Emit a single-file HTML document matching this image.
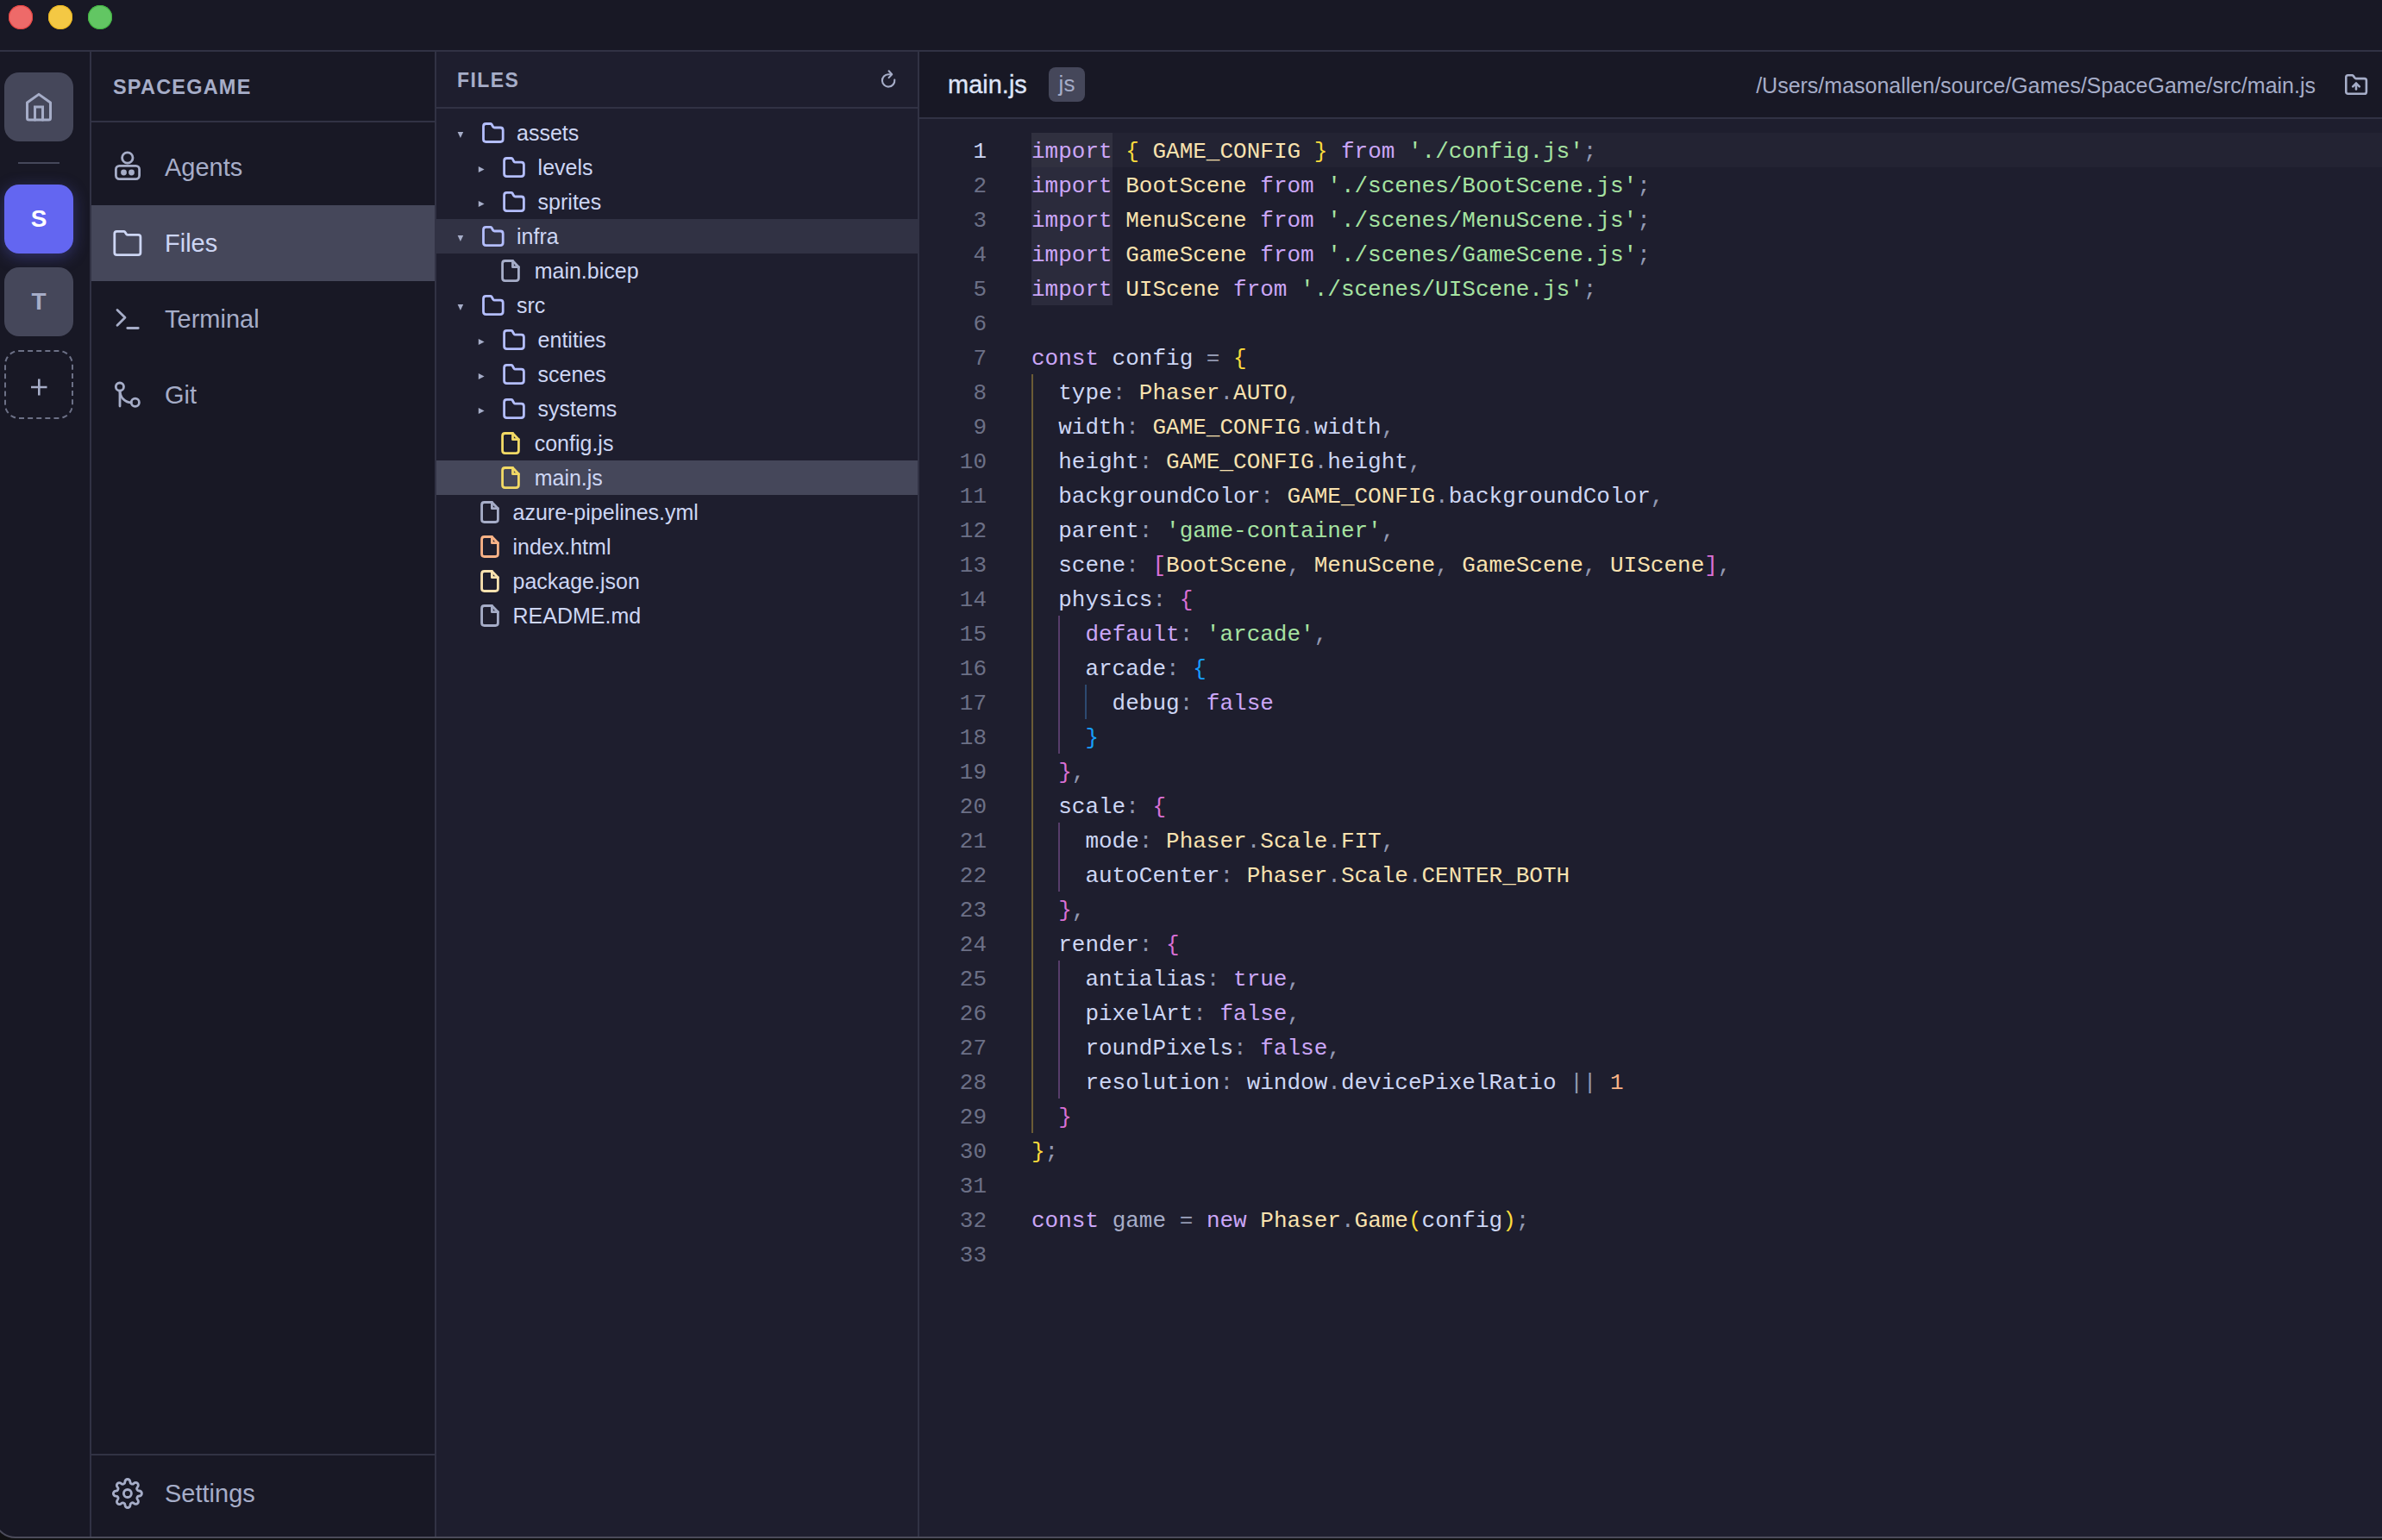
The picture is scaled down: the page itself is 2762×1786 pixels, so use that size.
<!DOCTYPE html>
<html><head><meta charset="utf-8">
<style>
*{margin:0;padding:0;box-sizing:border-box}
html,body{width:2762px;height:1786px;overflow:hidden;background:#111113}
body{font-family:"Liberation Sans",sans-serif;position:relative}
.win{position:absolute;left:-8px;top:-22px;width:2802px;height:1806px;background:#181825;border-radius:26px;border:2px solid #4b4b5a;overflow:hidden}
.inner{position:absolute;left:6px;top:20px;width:2762px;height:1782px}
.abs{position:absolute}
.dot{position:absolute;top:6px;width:28px;height:28px;border-radius:50%}
.hline{position:absolute;height:2px;background:#313244}
.vline{position:absolute;width:2px;background:#313244}
/* left rail */
.rbtn{position:absolute;left:5px;width:80px;height:80px;border-radius:17px;background:#45475a;display:flex;align-items:center;justify-content:center;font-weight:bold;font-size:28px;color:#a6adc8}
/* sidebar */
.side{position:absolute;left:106px;top:60px;width:398px;height:1722px;background:#181825}
.sitem{position:absolute;left:0;width:398px;height:88px;color:#a6adc8;font-size:29px}
.sitem .lbl{position:absolute;left:85px;top:0;line-height:88px}
.sitem svg{position:absolute}
/* files */
.files{position:absolute;left:506px;top:60px;width:558px;height:1722px;background:#1e1e2e}
.row{position:absolute;left:0;width:558px;height:40px;font-size:25px;color:#cdd6f4}
.row .t{position:absolute;top:0;line-height:40px;white-space:pre}
.row svg{position:absolute}
/* editor */
.ed{position:absolute;left:1066px;top:60px;width:1696px;height:1722px;background:#1e1e2e}
.code{position:absolute;left:0;top:0;font-family:"Liberation Mono",monospace;font-size:26px;white-space:pre}
.ln{position:absolute;width:78px;text-align:right;left:0;color:#6c7086;font-family:"Liberation Mono",monospace;font-size:26px;line-height:40px}
.cl{position:absolute;left:130px;line-height:40px;color:#cdd6f4;font-family:"Liberation Mono",monospace;font-size:26px;white-space:pre}
.k{color:#cba6f7}.v{color:#f9e2af}.s{color:#a6e3a1}.p{color:#9399b2}.b1{color:#fcdc3c}.b2{color:#da70d6}.b3{color:#179fff}.n{color:#fab387}.d{color:#a6adc8}
</style></head><body>
<div class="win"><div class="inner">
<!-- title bar -->
<div class="dot" style="left:10px;background:#ee6a69;box-shadow:inset 0 0 0 1px #e5413f"></div>
<div class="dot" style="left:56px;background:#f4c844;box-shadow:inset 0 0 0 1px #e9b31c"></div>
<div class="dot" style="left:102px;background:#62c663;box-shadow:inset 0 0 0 1px #3fb23f"></div>
<div class="hline" style="left:0;top:58px;width:2762px"></div>

<!-- left rail -->
<div class="vline" style="left:104px;top:60px;height:1722px"></div>

<div class="rbtn" style="top:84px"><svg width="80" height="80" style="position:absolute;left:0;top:0" fill="none" stroke="#a6adc8" stroke-width="3" stroke-linejoin="round" stroke-linecap="round">
<path d="M26.5 35 L40 25.4 L53.5 35 V53 Q53.5 55.1 51.5 55.1 H28.5 Q26.5 55.1 26.5 53 Z"/><path d="M35.5 55 V40 H44.5 V55" stroke-linejoin="miter"/></svg></div>
<div class="abs" style="left:21px;top:188px;width:48px;height:2px;background:#45475a"></div>
<div class="rbtn" style="top:214px;background:#6366f1;color:#fff;box-shadow:0 4px 18px rgba(99,102,241,0.35)">S</div>
<div class="rbtn" style="top:310px">T</div>
<div class="rbtn" style="top:406px;background:transparent;border:2px dashed #6c7086"><svg width="30" height="30" style="position:absolute;left:23px;top:26px" stroke="#a6adc8" stroke-width="2.6"><path d="M6 15H24.5M15.3 5.5V24.5"/></svg></div>


<!-- sidebar -->
<div class="side">

<div class="abs" style="left:25px;top:24px;font-size:23.5px;font-weight:bold;letter-spacing:1.2px;color:#a6adc8;line-height:34px">SPACEGAME</div>
<div class="hline" style="left:0;top:80px;width:398px"></div>
<svg class="abs" width="398" height="1722" style="left:0;top:0;overflow:visible" fill="none" stroke-linecap="round" stroke-linejoin="round">
</svg>
<div class="sitem" style="top:90px"><span class="lbl">Agents</span></div>
<div class="sitem" style="top:178px;background:#45475a;color:#cdd6f4"><span class="lbl">Files</span></div>
<div class="sitem" style="top:266px"><span class="lbl">Terminal</span></div>
<div class="sitem" style="top:354px"><span class="lbl">Git</span></div>
<div class="hline" style="left:0;top:1626px;width:398px"></div>
<div class="sitem" style="top:1628px"><span class="lbl">Settings</span></div>
<svg class="abs" width="398" height="1722" style="left:0;top:0" fill="none" stroke-linecap="round" stroke-linejoin="round" stroke-width="2.8">
<g stroke="#a6adc8">
<circle cx="41.8" cy="123" r="6.2"/>
<rect x="28.4" y="132.4" width="27.2" height="15.2" rx="4"/>
<circle cx="37.5" cy="140" r="3.4" fill="#a6adc8" stroke="none"/><circle cx="46.5" cy="140" r="3.4" fill="#a6adc8" stroke="none"/>
</g>
<path stroke="#cdd6f4" d="M26.8 211 Q26.8 208.4 29.4 208.4 H37.4 Q38.4 208.4 39 209.2 L40.6 211.6 Q41.2 212.4 42.2 212.4 H54.3 Q56.9 212.4 56.9 215 V233 Q56.9 235.6 54.3 235.6 H29.4 Q26.8 235.6 26.8 233 Z"/>
<g stroke="#a6adc8">
<path d="M30 299.5 L39 308.3 L30 317.2"/><path d="M41.8 320.5 H54.2"/>
<circle cx="32.9" cy="388.6" r="4.6"/><path d="M33 393.2 V411"/><path d="M33 394 C33.5 401, 39 406.8, 46.2 406.8"/><circle cx="50.8" cy="406.8" r="4.6"/>
<g transform="translate(23.9 1654) scale(1.5)" stroke-width="1.9"><circle cx="12" cy="12" r="3"/><path d="M19.4 15a1.65 1.65 0 0 0 .33 1.82l.06.06a2 2 0 0 1 0 2.83 2 2 0 0 1-2.83 0l-.06-.06a1.65 1.65 0 0 0-1.82-.33 1.65 1.65 0 0 0-1 1.51V21a2 2 0 0 1-2 2 2 2 0 0 1-2-2v-.09A1.650 1.65 0 0 0 9 19.4a1.65 1.65 0 0 0-1.820.33l-.06.06a2 2 0 0 1-2.83 0 2 2 0 0 1 0-2.83l.06-.06a1.65 1.65 0 0 0 .33-1.82 1.65 1.65 0 0 0-1.51-1H3a2 2 0 0 1-2-2 2 2 0 0 1 2-2h.09A1.65 1.65 0 0 0 4.6 9a1.65 1.65 0 0 0-.33-1.82l-.06-.06a2 2 0 0 1 0-2.83 2 2 0 0 1 2.83 0l.06.06a1.65 1.65 0 0 0 1.82.33H9a1.65 1.65 0 0 0 1-1.51V3a2 2 0 0 1 2-2 2 2 0 0 1 2 2v.09a1.65 1.65 0 0 0 1 1.51 1.65 1.65 0 0 0 1.82-.33l.06-.06a2 2 0 0 1 2.83 0 2 2 0 0 1 0 2.83l-.06.06a1.65 1.65 0 0 0-.33 1.82V9a1.65 1.65 0 0 0 1.51 1H21a2 2 0 0 1 2 2 2 2 0 0 1-2 2h-.09a1.65 1.65 0 0 0-1.51 1z"/></g>
</g>
</svg>

</div>
<div class="vline" style="left:504px;top:60px;height:1722px"></div>

<!-- files -->
<div class="files">
<div class="abs" style="left:24px;top:16px;font-size:23px;font-weight:bold;letter-spacing:1.4px;color:#a6adc8;line-height:34px">FILES</div>
<svg class="abs" width="30" height="30" style="left:509px;top:18px" fill="none" stroke="#a6adc8" stroke-width="2.1" stroke-linecap="round" stroke-linejoin="round"><path d="M22.3 14.6 A7.2 7.2 0 1 1 15 8.2 H18.5"/><path d="M15.6 4.3 L19.2 8.2 L15.6 12.1"/></svg>
<div class="hline" style="left:0;top:64px;width:558px"></div>
<div class="t abs" style="left:93.0px;top:74px;font-size:25px;line-height:40px;color:#cdd6f4;white-space:pre">assets</div>
<div class="t abs" style="left:117.6px;top:114px;font-size:25px;line-height:40px;color:#cdd6f4;white-space:pre">levels</div>
<div class="t abs" style="left:117.6px;top:154px;font-size:25px;line-height:40px;color:#cdd6f4;white-space:pre">sprites</div>
<div class="abs" style="left:0;top:194px;width:558px;height:40px;background:#313244"></div>
<div class="t abs" style="left:93.0px;top:194px;font-size:25px;line-height:40px;color:#cdd6f4;white-space:pre">infra</div>
<div class="t abs" style="left:113.7px;top:234px;font-size:25px;line-height:40px;color:#cdd6f4;white-space:pre">main.bicep</div>
<div class="t abs" style="left:93.0px;top:274px;font-size:25px;line-height:40px;color:#cdd6f4;white-space:pre">src</div>
<div class="t abs" style="left:117.6px;top:314px;font-size:25px;line-height:40px;color:#cdd6f4;white-space:pre">entities</div>
<div class="t abs" style="left:117.6px;top:354px;font-size:25px;line-height:40px;color:#cdd6f4;white-space:pre">scenes</div>
<div class="t abs" style="left:117.6px;top:394px;font-size:25px;line-height:40px;color:#cdd6f4;white-space:pre">systems</div>
<div class="t abs" style="left:113.7px;top:434px;font-size:25px;line-height:40px;color:#cdd6f4;white-space:pre">config.js</div>
<div class="abs" style="left:0;top:474px;width:558px;height:40px;background:#45475a"></div>
<div class="t abs" style="left:113.7px;top:474px;font-size:25px;line-height:40px;color:#cdd6f4;white-space:pre">main.js</div>
<div class="t abs" style="left:88.5px;top:514px;font-size:25px;line-height:40px;color:#cdd6f4;white-space:pre">azure-pipelines.yml</div>
<div class="t abs" style="left:88.5px;top:554px;font-size:25px;line-height:40px;color:#cdd6f4;white-space:pre">index.html</div>
<div class="t abs" style="left:88.5px;top:594px;font-size:25px;line-height:40px;color:#cdd6f4;white-space:pre">package.json</div>
<div class="t abs" style="left:88.5px;top:634px;font-size:25px;line-height:40px;color:#cdd6f4;white-space:pre">README.md</div>
<svg class="abs" width="558" height="800" style="left:0;top:0" fill="none" stroke-width="2.8" stroke-linecap="round" stroke-linejoin="round"><g stroke="#b4befe"><path d="M54.5 86.5 Q54.5 83.5 57.5 83.5 H62.6 Q63.5 83.5 64.1 84.2 L65.8 87.2 Q66.4 88.0 67.4 88.0 H74.2 Q77.2 88.0 77.2 91.0 V101.5 Q77.2 104.5 74.2 104.5 H57.5 Q54.5 104.5 54.5 101.5 Z"/></g><path fill="#a6adc8" d="M24.6 92.9 H31.2 L27.9 99.9 Z"/><g stroke="#b4befe"><path d="M78.6 126.5 Q78.6 123.5 81.6 123.5 H86.7 Q87.6 123.5 88.2 124.2 L89.9 127.3 Q90.5 128.1 91.5 128.1 H98.4 Q101.4 128.1 101.4 131.1 V141.6 Q101.4 144.6 98.4 144.6 H81.6 Q78.6 144.6 78.6 141.6 Z"/></g><path fill="#a6adc8" d="M48.8 132.9 V139.9 L55.6 136.4 Z"/><g stroke="#b4befe"><path d="M78.6 166.4 Q78.6 163.4 81.6 163.4 H86.7 Q87.6 163.4 88.2 164.2 L89.9 167.2 Q90.5 168.0 91.5 168.0 H98.4 Q101.4 168.0 101.4 171.0 V181.6 Q101.4 184.6 98.4 184.6 H81.6 Q78.6 184.6 78.6 181.6 Z"/></g><path fill="#a6adc8" d="M48.8 172.9 V179.9 L55.6 176.4 Z"/><g stroke="#b4befe"><path d="M54.5 206.4 Q54.5 203.4 57.5 203.4 H62.6 Q63.5 203.4 64.1 204.2 L65.8 207.2 Q66.4 208.0 67.4 208.0 H74.2 Q77.2 208.0 77.2 211.0 V221.6 Q77.2 224.6 74.2 224.6 H57.5 Q54.5 224.6 54.5 221.6 Z"/></g><path fill="#a6adc8" d="M24.6 212.9 H31.2 L27.9 219.9 Z"/><g stroke="#a6adc8"><path d="M76.6 262.6 V245.5 Q76.6 242.5 79.6 242.5 H88.5 L95.4 249.7 V262.6 Q95.4 265.6 92.4 265.6 H79.6 Q76.6 265.6 76.6 262.6 Z"/><path d="M88.5 242.5 V249.7 H95.4"/></g><g stroke="#b4befe"><path d="M54.5 286.4 Q54.5 283.4 57.5 283.4 H62.6 Q63.5 283.4 64.1 284.2 L65.8 287.2 Q66.4 288.1 67.4 288.1 H74.2 Q77.2 288.1 77.2 291.1 V301.6 Q77.2 304.6 74.2 304.6 H57.5 Q54.5 304.6 54.5 301.6 Z"/></g><path fill="#a6adc8" d="M24.6 292.9 H31.2 L27.9 299.9 Z"/><g stroke="#b4befe"><path d="M78.6 326.4 Q78.6 323.4 81.6 323.4 H86.7 Q87.6 323.4 88.2 324.2 L89.9 327.2 Q90.5 328.1 91.5 328.1 H98.4 Q101.4 328.1 101.4 331.1 V341.6 Q101.4 344.6 98.4 344.6 H81.6 Q78.6 344.6 78.6 341.6 Z"/></g><path fill="#a6adc8" d="M48.8 332.9 V339.9 L55.6 336.4 Z"/><g stroke="#b4befe"><path d="M78.6 366.4 Q78.6 363.4 81.6 363.4 H86.7 Q87.6 363.4 88.2 364.2 L89.9 367.2 Q90.5 368.1 91.5 368.1 H98.4 Q101.4 368.1 101.4 371.1 V381.6 Q101.4 384.6 98.4 384.6 H81.6 Q78.6 384.6 78.6 381.6 Z"/></g><path fill="#a6adc8" d="M48.8 372.9 V379.9 L55.6 376.4 Z"/><g stroke="#b4befe"><path d="M78.6 406.4 Q78.6 403.4 81.6 403.4 H86.7 Q87.6 403.4 88.2 404.2 L89.9 407.2 Q90.5 408.1 91.5 408.1 H98.4 Q101.4 408.1 101.4 411.1 V421.6 Q101.4 424.6 98.4 424.6 H81.6 Q78.6 424.6 78.6 421.6 Z"/></g><path fill="#a6adc8" d="M48.8 412.9 V419.9 L55.6 416.4 Z"/><g stroke="#f2d965"><path d="M76.6 462.6 V445.5 Q76.6 442.5 79.6 442.5 H88.5 L95.4 449.7 V462.6 Q95.4 465.6 92.4 465.6 H79.6 Q76.6 465.6 76.6 462.6 Z"/><path d="M88.5 442.5 V449.7 H95.4"/></g><g stroke="#f2d965"><path d="M76.6 502.6 V485.5 Q76.6 482.5 79.6 482.5 H88.5 L95.4 489.7 V502.6 Q95.4 505.6 92.4 505.6 H79.6 Q76.6 505.6 76.6 502.6 Z"/><path d="M88.5 482.5 V489.7 H95.4"/></g><g stroke="#a6adc8"><path d="M52.6 542.5 V525.5 Q52.6 522.5 55.6 522.5 H64.4 L71.4 529.7 V542.5 Q71.4 545.5 68.4 545.5 H55.6 Q52.6 545.5 52.6 542.5 Z"/><path d="M64.4 522.5 V529.7 H71.4"/></g><g stroke="#fab387"><path d="M52.6 582.5 V565.5 Q52.6 562.5 55.6 562.5 H64.4 L71.4 569.7 V582.5 Q71.4 585.5 68.4 585.5 H55.6 Q52.6 585.5 52.6 582.5 Z"/><path d="M64.4 562.5 V569.7 H71.4"/></g><g stroke="#f9e2af"><path d="M52.6 622.5 V605.5 Q52.6 602.5 55.6 602.5 H64.4 L71.4 609.7 V622.5 Q71.4 625.5 68.4 625.5 H55.6 Q52.6 625.5 52.6 622.5 Z"/><path d="M64.4 602.5 V609.7 H71.4"/></g><g stroke="#a6adc8"><path d="M52.6 662.5 V645.5 Q52.6 642.5 55.6 642.5 H64.4 L71.4 649.7 V662.5 Q71.4 665.5 68.4 665.5 H55.6 Q52.6 665.5 52.6 662.5 Z"/><path d="M64.4 642.5 V649.7 H71.4"/></g></svg>
</div>
<div class="vline" style="left:1064px;top:60px;height:1722px"></div>

<!-- editor -->
<div class="ed">
<div class="abs" style="left:0;top:0;width:1696px;height:76px;background:#181825"></div>
<div class="hline" style="left:0;top:76px;width:1696px"></div>
<div class="abs" style="left:33px;top:18px;font-size:29px;line-height:40px;color:#dfe4f8;-webkit-text-stroke:0.35px #dfe4f8">main.js</div>
<div class="abs" style="left:150px;top:18px;width:42px;height:40px;border-radius:8px;background:#45475a;color:#a6adc8;font-size:26px;line-height:38px;text-align:center">js</div>
<div class="abs" id="path" style="right:77px;top:19px;font-size:25px;line-height:40px;color:#a6adc8;white-space:pre">/Users/masonallen/source/Games/SpaceGame/src/main.js</div>
<svg class="abs" width="34" height="34" style="left:1649px;top:21px" fill="none" stroke="#a6adc8" stroke-width="2.6" stroke-linecap="round" stroke-linejoin="round"><path d="M5.3 8.6 Q5.3 6.3 7.6 6.3 H12.3 Q13.2 6.3 13.8 7.1 L15.4 9.3 Q16 10.1 16.9 10.1 H26.6 Q28.9 10.1 28.9 12.4 V25.4 Q28.9 27.7 26.6 27.7 H7.6 Q5.3 27.7 5.3 25.4 Z"/><path d="M17 22.4 V15.8"/><path d="M13.2 19.4 L17 15.7 L20.8 19.4"/></svg>
<div class="abs" style="left:130px;top:94px;width:1600px;height:40px;background:#232333"></div>
<div class="abs" style="left:130px;top:94px;width:94px;height:40px;background:#30303f"></div>
<div class="abs" style="left:130px;top:134px;width:94px;height:40px;background:#2b2b3c"></div>
<div class="abs" style="left:130px;top:174px;width:94px;height:40px;background:#2b2b3c"></div>
<div class="abs" style="left:130px;top:214px;width:94px;height:40px;background:#2b2b3c"></div>
<div class="abs" style="left:130px;top:254px;width:94px;height:40px;background:#2b2b3c"></div>
<div class="abs" style="left:130px;top:374px;width:2px;height:880px;background:#6b5b35"></div>
<div class="abs" style="left:161px;top:654px;width:2px;height:160px;background:#573d6a"></div>
<div class="abs" style="left:161px;top:894px;width:2px;height:80px;background:#573d6a"></div>
<div class="abs" style="left:161px;top:1054px;width:2px;height:160px;background:#573d6a"></div>
<div class="abs" style="left:192px;top:734px;width:2px;height:40px;background:#2d4a70"></div>
<div class="ln" style="top:96px;color:#cdd6f4">1</div>
<div class="ln" style="top:136px;color:#6c7086">2</div>
<div class="ln" style="top:176px;color:#6c7086">3</div>
<div class="ln" style="top:216px;color:#6c7086">4</div>
<div class="ln" style="top:256px;color:#6c7086">5</div>
<div class="ln" style="top:296px;color:#6c7086">6</div>
<div class="ln" style="top:336px;color:#6c7086">7</div>
<div class="ln" style="top:376px;color:#6c7086">8</div>
<div class="ln" style="top:416px;color:#6c7086">9</div>
<div class="ln" style="top:456px;color:#6c7086">10</div>
<div class="ln" style="top:496px;color:#6c7086">11</div>
<div class="ln" style="top:536px;color:#6c7086">12</div>
<div class="ln" style="top:576px;color:#6c7086">13</div>
<div class="ln" style="top:616px;color:#6c7086">14</div>
<div class="ln" style="top:656px;color:#6c7086">15</div>
<div class="ln" style="top:696px;color:#6c7086">16</div>
<div class="ln" style="top:736px;color:#6c7086">17</div>
<div class="ln" style="top:776px;color:#6c7086">18</div>
<div class="ln" style="top:816px;color:#6c7086">19</div>
<div class="ln" style="top:856px;color:#6c7086">20</div>
<div class="ln" style="top:896px;color:#6c7086">21</div>
<div class="ln" style="top:936px;color:#6c7086">22</div>
<div class="ln" style="top:976px;color:#6c7086">23</div>
<div class="ln" style="top:1016px;color:#6c7086">24</div>
<div class="ln" style="top:1056px;color:#6c7086">25</div>
<div class="ln" style="top:1096px;color:#6c7086">26</div>
<div class="ln" style="top:1136px;color:#6c7086">27</div>
<div class="ln" style="top:1176px;color:#6c7086">28</div>
<div class="ln" style="top:1216px;color:#6c7086">29</div>
<div class="ln" style="top:1256px;color:#6c7086">30</div>
<div class="ln" style="top:1296px;color:#6c7086">31</div>
<div class="ln" style="top:1336px;color:#6c7086">32</div>
<div class="ln" style="top:1376px;color:#6c7086">33</div>
<div class="cl" style="top:96px;left:130px"><span class="k">import</span> <span class="b1">{</span> <span class="v">GAME_CONFIG</span> <span class="b1">}</span> <span class="k">from</span> <span class="s">'./config.js'</span><span class="p">;</span></div>
<div class="cl" style="top:136px;left:130px"><span class="k">import</span> <span class="v">BootScene</span> <span class="k">from</span> <span class="s">'./scenes/BootScene.js'</span><span class="p">;</span></div>
<div class="cl" style="top:176px;left:130px"><span class="k">import</span> <span class="v">MenuScene</span> <span class="k">from</span> <span class="s">'./scenes/MenuScene.js'</span><span class="p">;</span></div>
<div class="cl" style="top:216px;left:130px"><span class="k">import</span> <span class="v">GameScene</span> <span class="k">from</span> <span class="s">'./scenes/GameScene.js'</span><span class="p">;</span></div>
<div class="cl" style="top:256px;left:130px"><span class="k">import</span> <span class="v">UIScene</span> <span class="k">from</span> <span class="s">'./scenes/UIScene.js'</span><span class="p">;</span></div>
<div class="cl" style="top:336px;left:130px"><span class="k">const</span> config <span class="p">=</span> <span class="b1">{</span></div>
<div class="cl" style="top:376px;left:130px">  type<span class="p">:</span> <span class="v">Phaser</span><span class="p">.</span><span class="v">AUTO</span><span class="p">,</span></div>
<div class="cl" style="top:416px;left:130px">  width<span class="p">:</span> <span class="v">GAME_CONFIG</span><span class="p">.</span>width<span class="p">,</span></div>
<div class="cl" style="top:456px;left:130px">  height<span class="p">:</span> <span class="v">GAME_CONFIG</span><span class="p">.</span>height<span class="p">,</span></div>
<div class="cl" style="top:496px;left:130px">  backgroundColor<span class="p">:</span> <span class="v">GAME_CONFIG</span><span class="p">.</span>backgroundColor<span class="p">,</span></div>
<div class="cl" style="top:536px;left:130px">  parent<span class="p">:</span> <span class="s">'game-container'</span><span class="p">,</span></div>
<div class="cl" style="top:576px;left:130px">  scene<span class="p">:</span> <span class="b2">[</span><span class="v">BootScene</span><span class="p">,</span> <span class="v">MenuScene</span><span class="p">,</span> <span class="v">GameScene</span><span class="p">,</span> <span class="v">UIScene</span><span class="b2">]</span><span class="p">,</span></div>
<div class="cl" style="top:616px;left:130px">  physics<span class="p">:</span> <span class="b2">{</span></div>
<div class="cl" style="top:656px;left:130px">    <span class="k">default</span><span class="p">:</span> <span class="s">'arcade'</span><span class="p">,</span></div>
<div class="cl" style="top:696px;left:130px">    arcade<span class="p">:</span> <span class="b3">{</span></div>
<div class="cl" style="top:736px;left:130px">      debug<span class="p">:</span> <span class="k">false</span></div>
<div class="cl" style="top:776px;left:130px">    <span class="b3">}</span></div>
<div class="cl" style="top:816px;left:130px">  <span class="b2">}</span><span class="p">,</span></div>
<div class="cl" style="top:856px;left:130px">  scale<span class="p">:</span> <span class="b2">{</span></div>
<div class="cl" style="top:896px;left:130px">    mode<span class="p">:</span> <span class="v">Phaser</span><span class="p">.</span><span class="v">Scale</span><span class="p">.</span><span class="v">FIT</span><span class="p">,</span></div>
<div class="cl" style="top:936px;left:130px">    autoCenter<span class="p">:</span> <span class="v">Phaser</span><span class="p">.</span><span class="v">Scale</span><span class="p">.</span><span class="v">CENTER_BOTH</span></div>
<div class="cl" style="top:976px;left:130px">  <span class="b2">}</span><span class="p">,</span></div>
<div class="cl" style="top:1016px;left:130px">  render<span class="p">:</span> <span class="b2">{</span></div>
<div class="cl" style="top:1056px;left:130px">    antialias<span class="p">:</span> <span class="k">true</span><span class="p">,</span></div>
<div class="cl" style="top:1096px;left:130px">    pixelArt<span class="p">:</span> <span class="k">false</span><span class="p">,</span></div>
<div class="cl" style="top:1136px;left:130px">    roundPixels<span class="p">:</span> <span class="k">false</span><span class="p">,</span></div>
<div class="cl" style="top:1176px;left:130px">    resolution<span class="p">:</span> window<span class="p">.</span>devicePixelRatio <span class="p">||</span> <span class="n">1</span></div>
<div class="cl" style="top:1216px;left:130px">  <span class="b2">}</span></div>
<div class="cl" style="top:1256px;left:130px"><span class="b1">}</span><span class="p">;</span></div>
<div class="cl" style="top:1336px;left:130px"><span class="k">const</span> <span class="d">game</span> <span class="p">=</span> <span class="k">new</span> <span class="v">Phaser</span><span class="p">.</span><span class="v">Game</span><span class="b1">(</span>config<span class="b1">)</span><span class="p">;</span></div>
</div>
</div></div>
</body></html>
